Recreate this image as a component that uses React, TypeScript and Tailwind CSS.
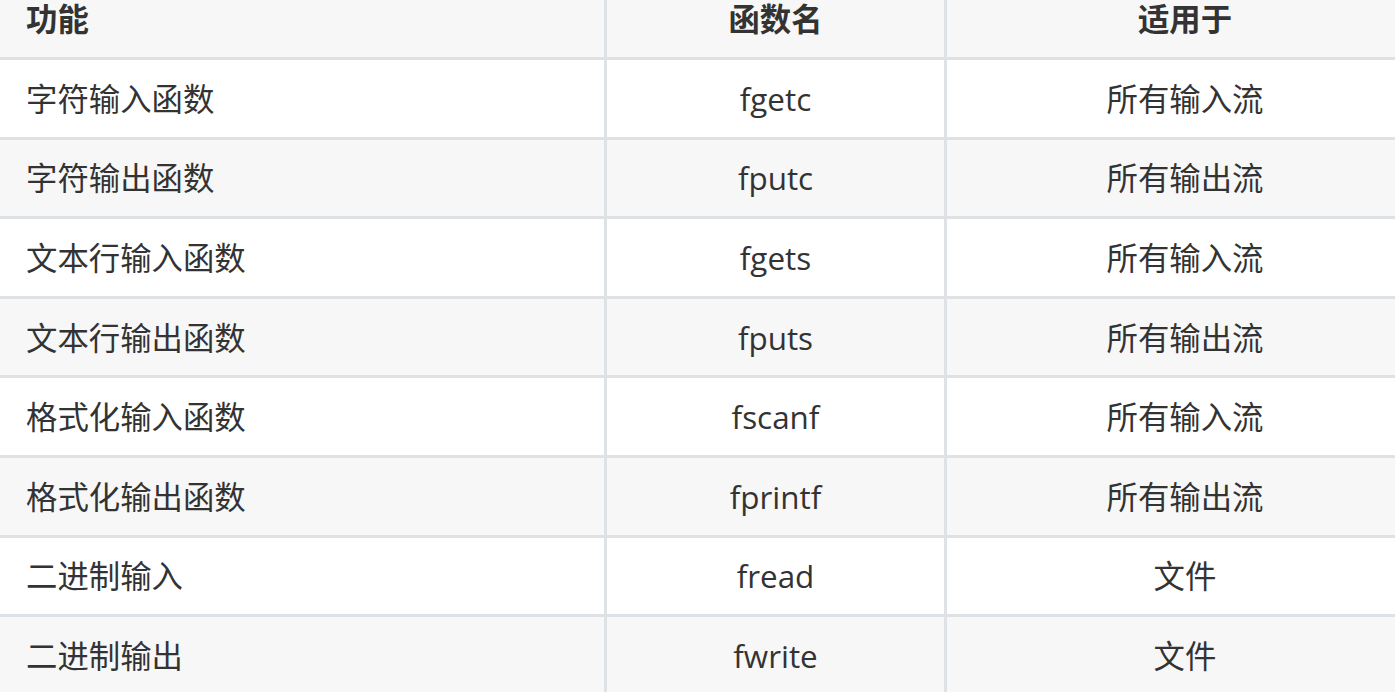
const rows: [string, string, string][] = [
  ['字符输入函数', 'fgetc', '所有输入流'],
  ['字符输出函数', 'fputc', '所有输出流'],
  ['文本行输入函数', 'fgets', '所有输入流'],
  ['文本行输出函数', 'fputs', '所有输出流'],
  ['格式化输入函数', 'fscanf', '所有输入流'],
  ['格式化输出函数', 'fprintf', '所有输出流'],
  ['二进制输入', 'fread', '文件'],
  ['二进制输出', 'fwrite', '文件'],
];

const font = { fontFamily: '"Open Sans", "Noto Sans CJK SC", sans-serif' };

export default function App() {
  return (
    <div className="w-[1395px] h-[692px] overflow-hidden bg-white text-[#333333] text-[31.4px]" style={font}>
      <div className="w-[1423px]">
        {/* header (top is scrolled off) */}
        <div className="flex h-[60px] bg-[#f7f7f7] border-b-[3px] border-[#dfe2e5] font-bold leading-[38px]">
          <div className="w-[607px] shrink-0 border-r-[3px] border-[#dfe2e5] pl-[26px]">功能</div>
          <div className="w-[340px] shrink-0 border-r-[3px] border-[#dfe2e5] text-center">函数名</div>
          <div className="w-[476px] shrink-0 text-center">适用于</div>
        </div>
        {rows.map((r, i) => (
          <div
            key={i}
            className={`flex h-[79.6px] border-b-[3px] border-[#dfe2e5] items-stretch ${i % 2 === 0 ? 'bg-white' : 'bg-[#f7f7f7]'}`}
          >
            <div className="w-[607px] shrink-0 border-r-[3px] border-[#dfe2e5] pl-[26px] flex items-center">{r[0]}</div>
            <div className="w-[340px] shrink-0 border-r-[3px] border-[#dfe2e5] flex items-center justify-center">{r[1]}</div>
            <div className="w-[476px] shrink-0 flex items-center justify-center">{r[2]}</div>
          </div>
        ))}
      </div>
    </div>
  );
}
